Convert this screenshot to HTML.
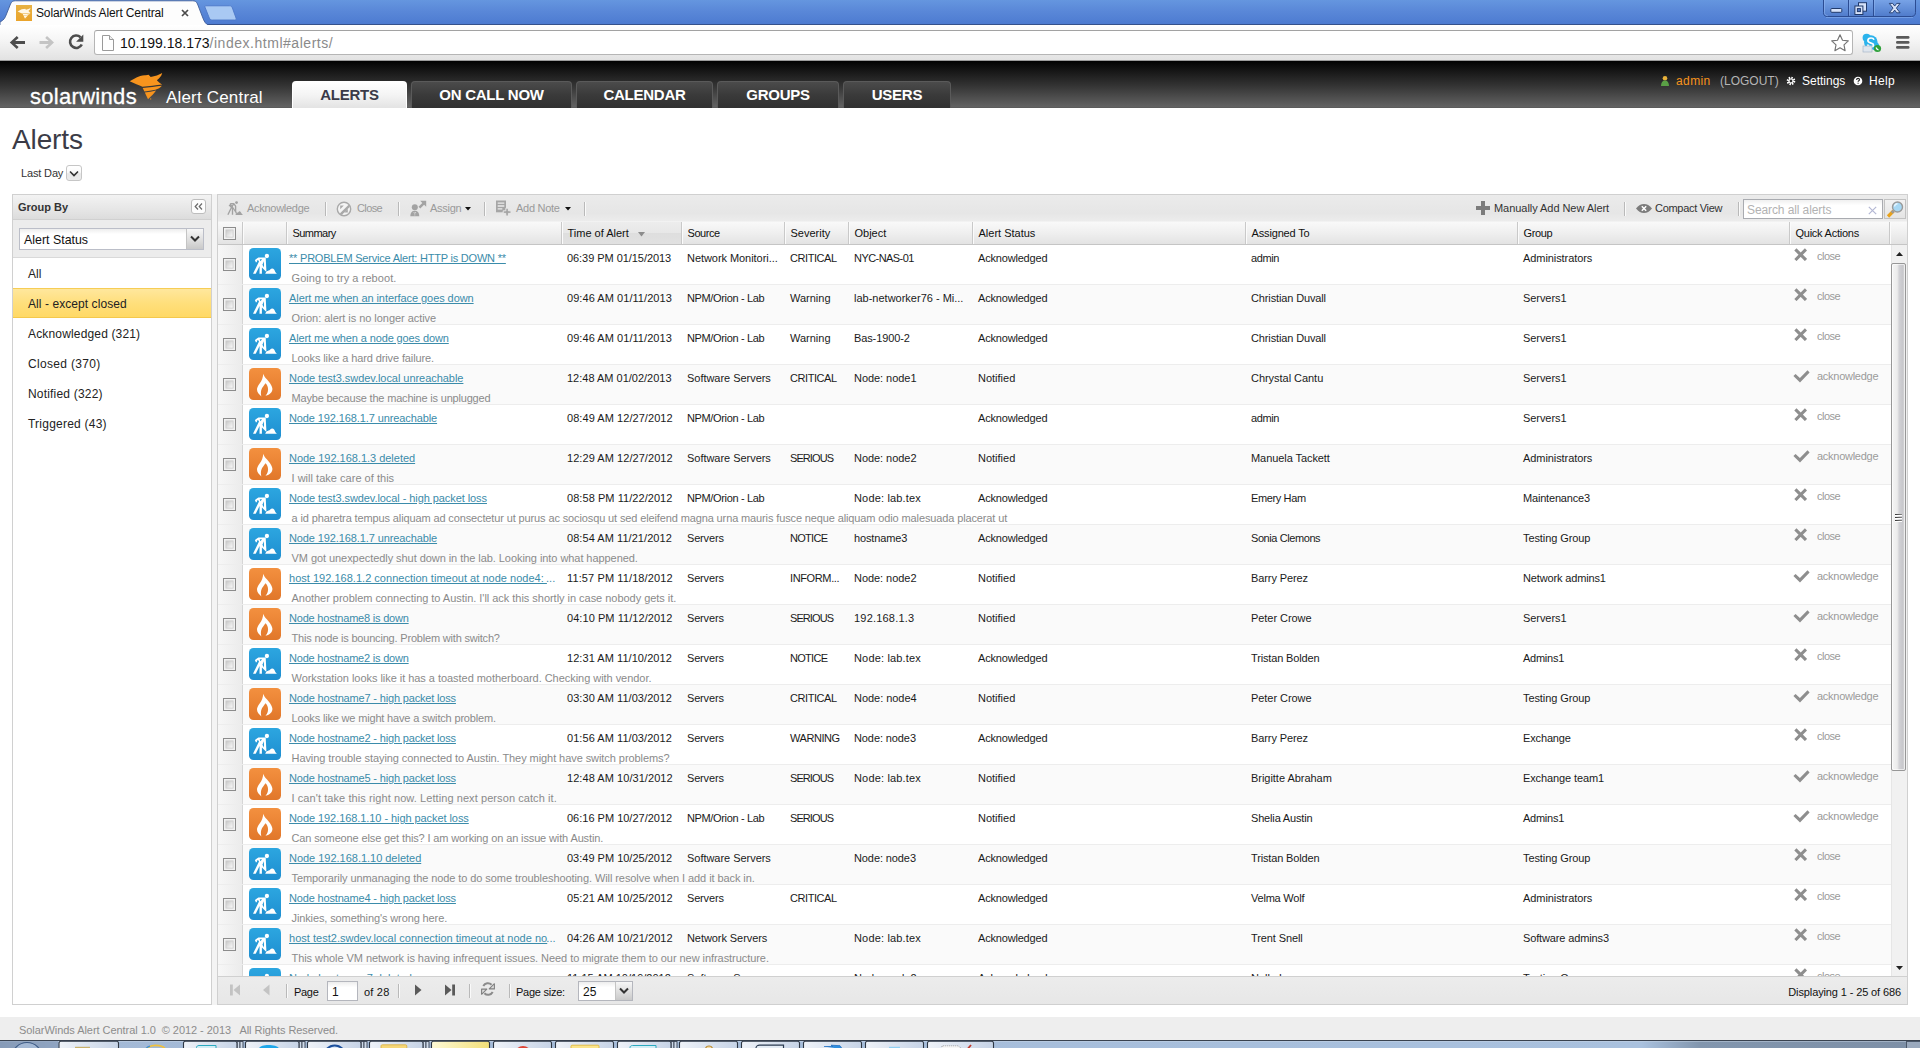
<!DOCTYPE html>
<html><head><meta charset="utf-8"><title>SolarWinds Alert Central</title>
<style>
*{box-sizing:border-box;margin:0;padding:0}
html,body{width:1920px;height:1048px;overflow:hidden;background:#fff;font-family:"Liberation Sans",sans-serif;font-size:11px;color:#222}
body{position:relative}
.abs{position:absolute}
/* ---------- browser chrome ---------- */
#tabstrip{position:absolute;left:0;top:0;width:1920px;height:25px;background:linear-gradient(#6596df,#5a88d8 45%,#4d7bd1);border-bottom:1px solid #35518b}
#toolbar{position:absolute;left:0;top:25px;width:1920px;height:36px;background:linear-gradient(#ffffff,#f6f6f6 40%,#e2e2e2);border-bottom:1px solid #9c9c9c}
#urlbar{position:absolute;left:94px;top:5px;width:1759px;height:25px;background:#fff;border:1px solid #b5b5b5;border-top-color:#a2a2a2;border-radius:3px}
#url{position:absolute;left:25px;top:3px;font-size:14px;line-height:18px;color:#111;white-space:nowrap}
#url span{color:#8a8a8a;letter-spacing:0.53px}
#tabtitle{position:absolute;left:36px;top:5px;font-size:12px;line-height:16px;color:#111;white-space:nowrap;letter-spacing:-0.13px}
/* ---------- app header ---------- */
#hdr{position:absolute;left:0;top:61px;width:1920px;height:47px;background:linear-gradient(#010101,#0c0c0c 10%,#333 52%,#626262 97%,#585858)}
.nav{position:absolute;top:20px;height:27px;border-radius:4px 4px 0 0;font-weight:bold;font-size:15px;line-height:26px;text-align:center;color:#fff;background:linear-gradient(#4b4b4b,#3a3a3a 50%,#303030);border:1px solid #5a5a5a;border-bottom:none;letter-spacing:-0.25px}
.nav.on{background:linear-gradient(#ffffff,#f4f4f4 50%,#e3e3e3);color:#3a3a48;border-color:#fff}
#sw{position:absolute;left:30px;top:23px;font-size:22px;line-height:26px;color:#fff;letter-spacing:0.3px;-webkit-text-stroke:0.3px #fff}
#ac{position:absolute;left:166px;top:26px;font-size:17px;line-height:22px;color:#fff;white-space:nowrap;letter-spacing:0.18px}
#usr{position:absolute;top:13px;font-size:12px;line-height:14px;white-space:nowrap}
/* ---------- title ---------- */
#ttl{position:absolute;left:12px;top:124px;font-size:28px;line-height:32px;color:#3b3b46;letter-spacing:-0.12px}
#lastday{position:absolute;left:21px;top:166px;font-size:11px;line-height:14px;color:#333;letter-spacing:-0.15px}
#ldbtn{position:absolute;left:66px;top:165px;width:16px;height:16px;border:1px solid #c6c6c6;border-radius:3px;background:linear-gradient(#fff,#fafafa 45%,#e8e8e8 55%,#ececec)}
/* ---------- sidebar ---------- */
#side{position:absolute;left:12px;top:194px;width:200px;height:811px;border:1px solid #d0d0d0;background:#fff}
#sidehd{position:absolute;left:0;top:0;width:198px;height:25px;background:linear-gradient(#f3f3f3,#e6e6e6 60%,#dcdcdc);border-bottom:1px solid #d0d0d0;font-weight:bold;font-size:11px;line-height:25px;padding-left:5px;color:#333}
#sidecb{position:absolute;left:0;top:25px;width:198px;height:38px;background:#ececec;border-bottom:1px solid #d9d9d9}
#combo{position:absolute;left:6px;top:8px;width:185px;height:22px;border:1px solid #bbbec8;background:linear-gradient(#ededed,#fff 25%);font-size:12.400px;line-height:22px;padding-left:4px;color:#111}
#combo i{position:absolute;right:0;top:0;width:17px;height:20px;background:linear-gradient(#f7f7f7,#dcdcdc 60%,#c9c9c9);border-left:1px solid #c4c4c4}
.li{position:absolute;left:0;width:198px;height:30px;font-size:12px;line-height:30px;padding-left:15px;color:#222}
.li.sel{background:linear-gradient(#ffe79d,#ffdf7c 50%,#ffd966);border-top:1px solid #f6cd55;border-bottom:1px solid #f4c84c;line-height:30px}
/* ---------- grid panel ---------- */
#grid{position:absolute;left:217px;top:194px;width:1691px;height:811px;border:1px solid #d0d0d0;background:#fff;overflow:hidden}
#tb{position:absolute;left:0;top:0;width:1689px;height:27px;background:linear-gradient(#ebebeb,#e6e6e6 70%,#ececec);border-bottom:1px solid #f2f2f2}
.tbt{position:absolute;top:6px;font-size:11px;line-height:14px;color:#9a9a9a;white-space:nowrap;letter-spacing:-0.28px}
.tbt.dk{color:#333;letter-spacing:-0.05px}
.tsep{position:absolute;top:7px;width:1px;height:14px;background:#b9b9b9;box-shadow:1px 0 0 #fafafa}
#srch{position:absolute;left:1525px;top:4px;width:140px;height:20px;border:1px solid #a9abb0;background:linear-gradient(#f0f0f0,#fff 30%);font-size:12px;line-height:20px;padding-left:3px;color:#b2b2b2;letter-spacing:-0.1px;white-space:nowrap}
#sbtn{position:absolute;left:1666px;top:4px;width:22px;height:20px;border:1px solid #c2c2c2;background:linear-gradient(#f2f2f2,#e4e4e4)}
#gh{position:absolute;left:0;top:27px;width:1689px;height:23px;background:linear-gradient(#f9f9f9,#efefef 50%,#e3e3e3);border-bottom:1px solid #c5c5c5}
.hc{position:absolute;top:0;height:22px;border-left:1px solid #c9c9c9;box-shadow:inset 1px 0 0 #fbfbfb;font-size:11px;line-height:22px;padding-left:5.500px;color:#111;white-space:nowrap}
.cb{position:absolute;width:13px;height:13px;border:1px solid #8c8c8c;background:linear-gradient(135deg,#c4c4c4 15%,#f6f6f6 75%);box-shadow:inset 0 0 0 1.500px #f2f2f2,inset 0 0 0 2.300px #c8c8c8}
#gb{position:absolute;left:0;top:50px;width:1673px;height:731px;overflow:hidden;background:#fff}
.row{position:absolute;left:0;width:1673px;height:40px;border-bottom:1px solid #ededed;background:#fff}
.row.alt{background:#fafafa}
.rcb{left:5px;top:13px}
.vsep{position:absolute;left:0;top:0;width:25px;height:39px;background:linear-gradient(90deg,#f7f7f7,#ebebeb);border-right:1px solid #d6d6d6}
.ic{position:absolute;left:31px;top:3px;width:32px;height:32px}
.ti{position:absolute;left:71px;top:6px;font-size:11px;line-height:14px;color:#3b8caa;text-decoration:underline;white-space:nowrap}
.tw{position:absolute;left:71px;top:6px;font-size:11px;line-height:14px;color:#3b8caa;white-space:pre}
.ti2{text-decoration:underline}
.el{letter-spacing:0.1px;margin-left:-1px}
.sub{position:absolute;left:73.500px;top:26px;font-size:11px;line-height:14px;color:#8a8a8a;white-space:nowrap}
.c{position:absolute;top:6px;font-size:11px;line-height:14px;color:#1a1a1a;white-space:nowrap}
.c-time{left:349px}.c-src{left:469px}.c-sev{left:572px}.c-obj{left:636px}.c-st{left:760px}.c-who{left:1033px}.c-grp{left:1305px}
.qa{position:absolute;left:1576px;top:3px;height:14px;white-space:nowrap}
.qi{position:absolute;left:0;top:1px;width:13px;height:13px}
.qt{position:absolute;left:23px;top:1px;font-size:11px;line-height:14px;color:#9a9a9a}
#sb{position:absolute;left:1673px;top:50px;width:16px;height:731px;background:#f1f1f1;border-left:1px solid #e6e6e6}
#thumb{position:absolute;left:-1px;top:18px;width:15px;height:508px;border:1px solid #979797;border-radius:2px;background:linear-gradient(90deg,#f5f5f5,#ececec 40%,#d2d2d6 55%,#c8c8cc 80%,#d8d8d8);box-shadow:inset 0 0 0 1px rgba(255,255,255,.6)}
#thumb i{position:absolute;left:3px;width:7px;height:1px;background:linear-gradient(90deg,#333,#888);box-shadow:0 1px 0 #fff}
#pg{position:absolute;left:0;top:781px;width:1689px;height:28px;background:linear-gradient(#ececec,#e7e7e7);border-top:1px solid #d0d0d0}
.pt{position:absolute;top:8px;font-size:11px;line-height:14px;color:#111;white-space:nowrap}
.pin{position:absolute;top:4px;height:20px;border:1px solid #b4b6bd;background:linear-gradient(#ededed,#fff 30%);font-size:12px;line-height:18px;padding:1px 0 0 4px;color:#111}
.pin i{position:absolute;right:0;top:0;width:17px;height:18px;background:linear-gradient(#f7f7f7,#dcdcdc 60%,#c9c9c9);border-left:1px solid #c4c4c4}
/* ---------- footer ---------- */
#foot{position:absolute;left:0;top:1017px;width:1920px;height:24px;background:#eeeeee;font-size:11px;line-height:14px;color:#8c8c8c;padding:6px 0 0 19px;white-space:pre;letter-spacing:-0.05px}
#task{position:absolute;left:0;top:1040px;width:1920px;height:8px;overflow:hidden}
</style></head>
<body>
<svg width="0" height="0" style="position:absolute"><defs>
<linearGradient id="gblue" x1="0" y1="0" x2="0" y2="1"><stop offset="0" stop-color="#2ca6e0"/><stop offset="1" stop-color="#1e8dcf"/></linearGradient>
<linearGradient id="gorange" x1="0" y1="0" x2="0" y2="1"><stop offset="0" stop-color="#f3903f"/><stop offset="1" stop-color="#e1772a"/></linearGradient>
</defs></svg>
<!-- ======= browser chrome ======= -->
<div id="tabstrip">
<svg class="abs" style="left:0;top:0" width="260" height="26" viewBox="0 0 260 26">
 <path d="M0 26 L0 22 C4 20 5 18 6.500 14 L10.500 4 C11.500 1.500 13 .8 15.500 .8 L192.500 .8 C195 .8 196.500 1.500 197.500 4 L202.500 17 C204 21 205.500 24.500 209.500 25.500 L260 25.500 L260 26 Z" fill="#fdfdfd" stroke="#3f5d99" stroke-width="0.900"/>
 <path d="M205.800 5.800 L229.500 5.800 C231 5.800 231.800 6.400 232.400 7.900 L236 18 C236.500 19.500 236 20 234.500 20 L212.500 20 C211 20 210 19.500 209.300 18 L205.200 7.800 C204.700 6.300 204.800 5.800 205.800 5.800 Z" fill="#a9c9f3" stroke="#4d78c8" stroke-width="0.900"/>
 <defs><linearGradient id="fav" x1="0" y1="0" x2="0" y2="1"><stop offset="0" stop-color="#e7b244"/><stop offset="1" stop-color="#eaa32a"/></linearGradient></defs><rect x="16" y="5" width="16" height="16" fill="url(#fav)"/>
 <g transform="translate(17.300 7.700) scale(.4)" fill="#fff8e8"><path d="M.7 9.200L7.500 5.500C10 4 13 3 16.900 3.200L19.600 2.700 21.700 4.900C26 4.300 30 3 33.200 1 32.500 4 30.500 6.500 27.800 8.200 29.500 10 31.500 11.800 33.200 12.400 27 13.200 20 14 13.500 14.700 10 13.300 5 11 .7 9.200z"/><path d="M13.700 16C20 15.300 27 14.500 32.900 13.700 31.500 15.500 29 17 26.400 17.700 22.500 18.600 19 19.100 15.400 19.400z"/><path d="M15.800 20.400C19.500 20 23.500 19.400 27.100 18.500 25 21.500 22 24.500 19 27.200z"/><circle cx="21.700" cy="26.900" r=".55"/></g>
 <path d="M182 10l6 6M188 10l-6 6" stroke="#4a4a4a" stroke-width="1.700" fill="none"/>
</svg>
<div id="tabtitle">SolarWinds Alert Central</div>
<!-- window buttons -->
<svg class="abs" style="left:1822px;top:0" width="96" height="19" viewBox="0 0 96 19">
 <defs><linearGradient id="wb" x1="0" y1="0" x2="0" y2="1"><stop offset="0" stop-color="#7aa5e8"/><stop offset="1" stop-color="#4f7bcb"/></linearGradient></defs>
 <path d="M1.500 -1 L1.500 12.500 C1.500 15.500 3 16.500 5.500 16.500 L89.500 16.500 C92 16.500 93.500 15 93.500 12.500 L93.500 -1 Z" fill="url(#wb)" stroke="#2b4c93" stroke-width="1"/>
 <path d="M2.500 0V12.500C2.500 14.500 3.500 15.500 5.500 15.500" fill="none" stroke="#8fb4ef" stroke-width=".8" opacity=".8"/>
 <path d="M4 17.500H91" stroke="#86aeee" stroke-width=".9" opacity=".7"/>
 <path d="M26.500 0V16M51.500 0V16" stroke="#2b4c93" stroke-width="1"/><path d="M27.500 0V15.500M52.500 0V15.500" stroke="#8fb4ef" stroke-width=".8" opacity=".7"/>
 <rect x="8.800" y="8.500" width="11" height="3.800" rx="1" fill="#d6e2f9" stroke="#213a6b" stroke-width="1"/>
 <g stroke="#213a6b" stroke-width="1"><rect x="36.500" y="2.700" width="8" height="8.500" fill="#d6e2f9"/><rect x="32.900" y="6" width="8" height="8.500" fill="#d6e2f9"/><rect x="35.400" y="8.600" width="3" height="3" fill="#4f7bcb"/></g>
 <path d="M67.300 3.400h3.400l2 2.700 2-2.700h3.400l-3.700 4.700 3.700 4.700h-3.400l-2-2.700-2 2.700h-3.400l3.700-4.700z" fill="#d6e2f9" stroke="#213a6b" stroke-width=".9"/>
</svg>
</div>
<div id="toolbar">
 <svg class="abs" style="left:0;top:0" width="94" height="36" viewBox="0 0 94 36">
  <path d="M9.800 17.500l7-6.500 1.800 1.900-3.500 3.200h9.900v2.800h-9.900l3.500 3.200-1.800 1.900z" fill="#4d4d4d"/>
  <path d="M54 17.500l-7-6.500-1.800 1.900 3.500 3.200h-9.200v2.800h9.200l-3.500 3.200 1.800 1.900z" fill="#c4c4c4"/>
  <path d="M80.500 12.200 A6.200 6.200 0 1 0 81.800 19.500" fill="none" stroke="#4d4d4d" stroke-width="2.600"/>
  <path d="M83.300 9.500v7.200h-7.200z" fill="#4d4d4d"/>
 </svg>
 <div id="urlbar">
  <svg class="abs" style="left:7px;top:4px" width="12" height="16" viewBox="0 0 12 16"><path d="M.5.500h7l4 4v11H.5z" fill="#fff" stroke="#9a9a9a"/><path d="M7.500.5v4h4" fill="#eee" stroke="#9a9a9a"/></svg>
  <div id="url">10.199.18.173<span>/index.html#alerts/</span></div>
  <svg class="abs" style="left:1735px;top:2px" width="20" height="20" viewBox="0 0 20 20"><path d="M10 1.800l2.500 5.400 5.800.7-4.300 4 1.100 5.800L10 14.800l-5.100 2.900L6 11.900l-4.300-4 5.800-.7z" fill="#fff" stroke="#747474" stroke-width="1.150" stroke-linejoin="round"/></svg>
 </div>
 <!-- skype ext -->
 <svg class="abs" style="left:1861px;top:8px" width="22" height="20" viewBox="0 0 22 20">
  <g fill="#2bb3ec"><circle cx="9.800" cy="9" r="6.800"/><circle cx="5.600" cy="4.800" r="4"/><circle cx="14.200" cy="13.200" r="4"/></g>
  <path d="M6.500 11.500c.5 1.500 1.800 2.200 3.300 2.200 1.600 0 2.700-.7 2.700-1.800 0-2.400-5.600-1-5.600-4.300 0-1.600 1.400-2.600 3.100-2.600 1.500 0 2.600.6 3 1.800" fill="none" stroke="#fff" stroke-width="1.700"/>
  <rect x="2" y="13" width="9" height="6" fill="#dfe6ee" stroke="#9fb0c4" stroke-width=".6"/>
  <circle cx="16.500" cy="15.500" r="3.600" fill="#2fa13b"/>
  <path d="M15 14.500c.5 1.500 1.200 2 2.500 2.500" stroke="#fff" stroke-width="1.200" fill="none"/>
 </svg>
 <svg class="abs" style="left:1896px;top:10px" width="14" height="16" viewBox="0 0 14 16"><g fill="#5a5a5a"><rect x="0" y="1.100" width="13.500" height="2.700" rx="1.300"/><rect x="0" y="6.100" width="13.500" height="2.700" rx="1.300"/><rect x="0" y="11.100" width="13.500" height="2.700" rx="1.300"/></g></svg>
</div>

<!-- ======= app header ======= -->
<div id="hdr">
 <div id="sw">solarwinds</div>
 <svg class="abs" style="left:129px;top:11px" width="36" height="32" viewBox="0 0 36 32"><g fill="#f7941e"><path d="M.7 9.200L7.500 5.500C10 4 13 3 16.900 3.200L19.600 2.700 21.700 4.900C26 4.300 30 3 33.200 1 32.500 4 30.500 6.500 27.800 8.200 29.500 10 31.500 11.800 33.200 12.400 27 13.200 20 14 13.500 14.700 10 13.300 5 11 .7 9.200z"/><path d="M13.700 16C20 15.300 27 14.500 32.900 13.700 31.500 15.500 29 17 26.400 17.700 22.500 18.600 19 19.100 15.400 19.400z"/><path d="M15.800 20.400C19.500 20 23.500 19.400 27.100 18.500 25 21.500 22 24.500 19 27.200z"/><circle cx="21.700" cy="26.900" r=".55"/></g></svg>
 <div id="ac">Alert Central</div>
 <div class="nav on" style="left:292px;width:115px">ALERTS</div>
 <div class="nav" style="left:411px;width:161px">ON CALL NOW</div>
 <div class="nav" style="left:576px;width:137px">CALENDAR</div>
 <div class="nav" style="left:717px;width:122px">GROUPS</div>
 <div class="nav" style="left:843px;width:108px">USERS</div>
 <svg class="abs" style="left:1660px;top:14px" width="10" height="12" viewBox="0 0 10 12"><circle cx="5" cy="3.200" r="2.300" fill="#e8b23a"/><path d="M1 11c0-3.500 1.500-5.500 4-5.500s4 2 4 5.500z" fill="#5aa046"/></svg>
 <div id="usr" style="left:1676px;color:#f7941d;letter-spacing:0.4px">admin</div>
 <div id="usr" style="left:1720px;color:#b5b5b5">(LOGOUT)</div>
 <svg class="abs" style="left:1786px;top:15px" width="10" height="10" viewBox="0 0 10 10"><circle cx="5" cy="5" r="3.200" fill="none" stroke="#fff" stroke-width="2.200" stroke-dasharray="1.400 1.100"/><circle cx="5" cy="5" r="2" fill="none" stroke="#fff" stroke-width="1.200"/></svg>
 <div id="usr" style="left:1802px;color:#fff">Settings</div>
 <svg class="abs" style="left:1853px;top:15px" width="10" height="10" viewBox="0 0 10 10"><circle cx="5" cy="5" r="4.300" fill="#fff"/><path d="M3.600 4c0-1 .6-1.600 1.500-1.600s1.400.6 1.400 1.300c0 1-1.400 1-1.400 2.100M5.100 6.800v1" stroke="#222" stroke-width="1.100" fill="none"/></svg>
 <div id="usr" style="left:1869px;color:#fff;letter-spacing:0.3px">Help</div>
</div>

<!-- ======= title ======= -->
<div id="ttl">Alerts</div>
<div id="lastday">Last Day</div>
<div id="ldbtn"><svg class="abs" style="left:2px;top:4px" width="10" height="8" viewBox="0 0 10 8"><path d="M1 1.500l4 4 4-4" fill="none" stroke="#333" stroke-width="1.600"/></svg></div>

<!-- ======= sidebar ======= -->
<div class="abs" style="left:212px;top:194px;width:5px;height:811px;background:#f4f4f4"></div>
<div id="side">
 <div id="sidehd">Group By
  <svg class="abs" style="left:178px;top:4px" width="15" height="15" viewBox="0 0 15 15"><rect x=".5" y=".5" width="14" height="14" rx="2.500" fill="#fdfdfd" stroke="#bdbdbd"/><path d="M7 4.500L4.200 7.500 7 10.500M11 4.500L8.200 7.500 11 10.500" fill="none" stroke="#6a6a6a" stroke-width="1.200"/></svg>
 </div>
 <div id="sidecb"><div id="combo">Alert Status<i><svg class="abs" style="left:3px;top:6px" width="10" height="8" viewBox="0 0 10 8"><path d="M1 1.500l4 4 4-4" fill="none" stroke="#333" stroke-width="2"/></svg></i></div></div>
 <div class="li" style="top:64px">All</div>
 <div class="li sel" style="top:93px;letter-spacing:0.07px">All - except closed</div>
 <div class="li" style="top:124px;letter-spacing:0.16px">Acknowledged (321)</div>
 <div class="li" style="top:154px;letter-spacing:0.32px">Closed (370)</div>
 <div class="li" style="top:184px;letter-spacing:0.19px">Notified (322)</div>
 <div class="li" style="top:214px;letter-spacing:0.23px">Triggered (43)</div>
</div>

<!-- ======= grid ======= -->
<div id="grid">
 <div id="tb">
  <svg class="abs" style="left:9px;top:6px" width="17" height="15" viewBox="0 0 17 15"><g fill="none" stroke="#a2a2a2" stroke-width="1.350" stroke-linejoin="round"><path d="M3.300 2.600H6.800L8.600 5.200V10.200L9.300 12.200"/><path d="M6.800 2.600L3.700 8 .9 13.700"/><path d="M3.300 2.600L3.600 5.600 5.500 7.400V13.700"/><path d="M3.500 4.900L1.900 4.400"/><path d="M3.400 3L8.500 10.600" stroke-width="1.100"/></g><circle cx="9.550" cy="1.600" r="1.400" fill="#a2a2a2"/><path d="M8.400 13.900L9.400 12.100C10.600 11.900 11.200 11.400 11.700 10.800 12.300 10.100 13.100 10.200 13.700 11 14.300 12 14.800 13.100 16 13.900z" fill="#a2a2a2"/></svg>
  <div class="tbt" style="left:29px">Acknowledge</div>
  <div class="tsep" style="left:107px"></div>
  <svg class="abs" style="left:118px;top:6px" width="16" height="16" viewBox="0 0 16 16"><circle cx="8" cy="8" r="6.700" fill="#f4f4f4" stroke="#a9a9a9" stroke-width="1.400"/><path d="M3.800 12.600L12.600 3.800a6 6 0 0 1 1.300 2L5.800 13.900a6 6 0 0 1-2-1.300z" fill="#a9a9a9"/><path d="M4.200 4.600h3.600L4.200 8.200zM11.800 11.400H8.200l3.600-3.600z" fill="#a9a9a9"/></svg>
  <div class="tbt" style="left:139px;letter-spacing:-0.6px">Close</div>
  <div class="tsep" style="left:180px"></div>
  <svg class="abs" style="left:192px;top:5px" width="17" height="17" viewBox="0 0 17 17"><g fill="#a3a3a3"><circle cx="4.800" cy="7.300" r="3"/><path d="M.3 16.300c0-3.600 1.500-5.600 4.500-5.600s4.500 2 4.500 5.600z"/><path d="M10.200.8h6v6l-2.100-2.100-3.800 3.800-1.800-1.800 3.800-3.800z"/></g><path d="M3.800 12.200l1 1.200 1-1.200M4.800 14.500v.9" stroke="#f0f0f0" stroke-width=".8" fill="none"/></svg>
  <div class="tbt" style="left:212px">Assign</div>
  <svg class="abs" style="left:247px;top:12px" width="6" height="4" viewBox="0 0 6 4"><path d="M0 0h6L3 3.500z" fill="#111"/></svg>
  <div class="tsep" style="left:266px"></div>
  <svg class="abs" style="left:278px;top:5px" width="15" height="17" viewBox="0 0 15 17"><path d="M0 .5h10v11.800H0z" fill="#a6a6a6"/><path d="M1.700 3.200h6.600M1.700 6h6.600M1.700 8.800h4.600" stroke="#ececec" stroke-width="1.300"/><path d="M9.800 8.200h2.600v2.600H15v2.600h-2.600V16H9.800v-2.600H7.200v-2.600h2.600z" fill="#a6a6a6" stroke="#ececec" stroke-width=".9"/></svg>
  <div class="tbt" style="left:298px">Add Note</div>
  <svg class="abs" style="left:347px;top:12px" width="6" height="4" viewBox="0 0 6 4"><path d="M0 0h6L3 3.500z" fill="#111"/></svg>
  <div class="tsep" style="left:366px"></div>
  <svg class="abs" style="left:1258px;top:6px" width="14" height="14" viewBox="0 0 14 14"><path d="M5 0h4v5h5v4H9v5H5V9H0V5h5z" fill="#7c7c7c"/></svg>
  <div class="tbt dk" style="left:1276px">Manually Add New Alert</div>
  <div class="tsep" style="left:1406px"></div>
  <svg class="abs" style="left:1418px;top:9px" width="16" height="9" viewBox="0 0 16 9"><path d="M0 4.500C2.500 1.300 5 0 8 0s5.500 1.300 8 4.500C13.500 7.700 11 9 8 9S2.500 7.700 0 4.500z" fill="#7c7c7c"/><path d="M5.800 2.300l4.400 4.400M10.200 2.300L5.800 6.700" stroke="#fff" stroke-width="1.500"/></svg>
  <div class="tbt dk" style="left:1437px;letter-spacing:-0.3px">Compact View</div>
  <div class="tsep" style="left:1520px"></div>
  <div id="srch">Search all alerts<svg class="abs" style="left:124px;top:6px" width="9" height="9" viewBox="0 0 9 9"><path d="M.8.800l7.400 7.400M8.200.8L.8 8.200" stroke="#b4b8d4" stroke-width="1.200"/></svg></div>
  <div id="sbtn"><svg class="abs" style="left:1px;top:0" width="19" height="19" viewBox="0 0 19 19"><path d="M2 16.500l5.500-5.500" stroke="#e8a21c" stroke-width="3.200"/><path d="M5.800 12.800l1.700-1.700" stroke="#9a9a9a" stroke-width="2.800"/><circle cx="11.500" cy="7" r="5" fill="#a7d8f4" stroke="#9a9a9a" stroke-width="1.400"/><path d="M8.500 6.500a3.200 3.200 0 0 1 3-2.800" stroke="#e8f6ff" stroke-width="1.400" fill="none"/></svg></div>
 </div>
 <div id="gh">
  <span class="cb" style="left:5px;top:5px"></span>
  <div class="hc" style="left:24px;width:44px"></div>
  <div class="hc" style="left:68px;width:275px;letter-spacing:-0.55px">Summary</div>
  <div class="hc" style="left:343px;width:120px;background:linear-gradient(#ededed,#e7e7e7 50%,#dedede 50%,#e1e1e1)">Time of Alert<svg class="abs" style="left:75.500px;top:10px" width="7" height="4.500" viewBox="0 0 7 4.500"><path d="M0 0h7L3.500 4.500z" fill="#8c8c8c"/></svg></div>
  <div class="hc" style="left:463px;width:103px;letter-spacing:-0.45px">Source</div>
  <div class="hc" style="left:566px;width:64px">Severity</div>
  <div class="hc" style="left:630px;width:124px">Object</div>
  <div class="hc" style="left:754px;width:273px">Alert Status</div>
  <div class="hc" style="left:1027px;width:272px;letter-spacing:-0.15px">Assigned To</div>
  <div class="hc" style="left:1299px;width:272px;letter-spacing:-0.35px">Group</div>
  <div class="hc" style="left:1571px;width:100px;letter-spacing:-0.25px">Quick Actions</div>
  <div class="hc" style="left:1671px;width:18px"></div>
 </div>
 <div id="gb">
<div class="row" style="top:0px"><span class="vsep"></span><span class="cb rcb"></span><svg class="ic" viewBox="0 0 32 32"><rect width="32" height="32" rx="4.500" fill="url(#gblue)"/><g fill="#fff"><circle cx="17.900" cy="8" r="2.150"/><path fill-rule="evenodd" d="M9.400 9.500H16.700L17.400 22.700 16.900 23.600 12.900 19.600V25.800H10.500L10.600 17.900 6.700 25.800H4L10 13.400 9 12 7.700 12.900 8.200 13.800 7 14.500 5.900 12.300 6.800 11.300zM10.700 11.300L11.400 13.300 13.100 11.300zM14.900 13.200L13.400 16.700 15 19.600z"/><path d="M16.200 25.800L17.500 23.300C19 22.700 20.400 22.600 21.200 21.500 22.400 20 24.200 20.200 25.100 21.600 26 23 26.300 24.700 27.900 25.800z"/></g></svg><a class="ti" style="letter-spacing:-0.207px">** PROBLEM Service Alert: HTTP is DOWN **</a><span class="sub" style="letter-spacing:0.071px">Going to try a reboot.</span><span class="c c-time" style="letter-spacing:-0.056px">06:39 PM 01/15/2013</span><span class="c c-src" style="letter-spacing:-0.056px">Network Monitori...</span><span class="c c-sev" style="letter-spacing:-0.429px">CRITICAL</span><span class="c c-obj" style="letter-spacing:-0.556px">NYC-NAS-01</span><span class="c c-st" style="letter-spacing:-0.182px">Acknowledged</span><span class="c c-who" style="letter-spacing:-0.375px">admin</span><span class="c c-grp" style="letter-spacing:-0.077px">Administrators</span><span class="qa"><svg class="abs" style="left:0;top:0" width="13.400" height="13.400" viewBox="0 0 13.400 13.400"><path d="M1.400 1.400L12 12M12 1.400L1.400 12" stroke="#8e8e8e" stroke-width="3.100" fill="none"/></svg><span class="qt" style="letter-spacing:-0.5px">close</span></span></div>
<div class="row alt" style="top:40px"><span class="vsep"></span><span class="cb rcb"></span><svg class="ic" viewBox="0 0 32 32"><rect width="32" height="32" rx="4.500" fill="url(#gblue)"/><g fill="#fff"><circle cx="17.900" cy="8" r="2.150"/><path fill-rule="evenodd" d="M9.400 9.500H16.700L17.400 22.700 16.900 23.600 12.900 19.600V25.800H10.500L10.600 17.900 6.700 25.800H4L10 13.400 9 12 7.700 12.900 8.200 13.800 7 14.500 5.900 12.300 6.800 11.300zM10.700 11.300L11.400 13.300 13.100 11.300zM14.900 13.200L13.400 16.700 15 19.600z"/><path d="M16.200 25.800L17.500 23.300C19 22.700 20.400 22.600 21.200 21.500 22.400 20 24.200 20.200 25.100 21.600 26 23 26.300 24.700 27.900 25.800z"/></g></svg><a class="ti" style="letter-spacing:-0.069px">Alert me when an interface goes down</a><span class="sub" style="letter-spacing:-0.048px">Orion: alert is no longer active</span><span class="c c-time" style="letter-spacing:0.056px">09:46 AM 01/11/2013</span><span class="c c-src" style="letter-spacing:-0.357px">NPM/Orion - Lab</span><span class="c c-sev">Warning</span><span class="c c-obj">lab-networker76 - Mi...</span><span class="c c-st" style="letter-spacing:-0.182px">Acknowledged</span><span class="c c-who" style="letter-spacing:-0.133px">Christian Duvall</span><span class="c c-grp" style="letter-spacing:-0.071px">Servers1</span><span class="qa"><svg class="abs" style="left:0;top:0" width="13.400" height="13.400" viewBox="0 0 13.400 13.400"><path d="M1.400 1.400L12 12M12 1.400L1.400 12" stroke="#8e8e8e" stroke-width="3.100" fill="none"/></svg><span class="qt" style="letter-spacing:-0.5px">close</span></span></div>
<div class="row" style="top:80px"><span class="vsep"></span><span class="cb rcb"></span><svg class="ic" viewBox="0 0 32 32"><rect width="32" height="32" rx="4.500" fill="url(#gblue)"/><g fill="#fff"><circle cx="17.900" cy="8" r="2.150"/><path fill-rule="evenodd" d="M9.400 9.500H16.700L17.400 22.700 16.900 23.600 12.900 19.600V25.800H10.500L10.600 17.900 6.700 25.800H4L10 13.400 9 12 7.700 12.900 8.200 13.800 7 14.500 5.900 12.300 6.800 11.300zM10.700 11.300L11.400 13.300 13.100 11.300zM14.900 13.200L13.400 16.700 15 19.600z"/><path d="M16.200 25.800L17.500 23.300C19 22.700 20.400 22.600 21.200 21.500 22.400 20 24.200 20.200 25.100 21.600 26 23 26.300 24.700 27.900 25.800z"/></g></svg><a class="ti" style="letter-spacing:-0.117px">Alert me when a node goes down</a><span class="sub" style="letter-spacing:-0.113px">Looks like a hard drive failure.</span><span class="c c-time" style="letter-spacing:0.056px">09:46 AM 01/11/2013</span><span class="c c-src" style="letter-spacing:-0.357px">NPM/Orion - Lab</span><span class="c c-sev">Warning</span><span class="c c-obj" style="letter-spacing:-0.111px">Bas-1900-2</span><span class="c c-st" style="letter-spacing:-0.182px">Acknowledged</span><span class="c c-who" style="letter-spacing:-0.133px">Christian Duvall</span><span class="c c-grp" style="letter-spacing:-0.071px">Servers1</span><span class="qa"><svg class="abs" style="left:0;top:0" width="13.400" height="13.400" viewBox="0 0 13.400 13.400"><path d="M1.400 1.400L12 12M12 1.400L1.400 12" stroke="#8e8e8e" stroke-width="3.100" fill="none"/></svg><span class="qt" style="letter-spacing:-0.5px">close</span></span></div>
<div class="row alt" style="top:120px"><span class="vsep"></span><span class="cb rcb"></span><svg class="ic" viewBox="0 0 32 32"><rect width="32" height="32" rx="4.500" fill="url(#gorange)"/><path fill="#fff" d="M14.300 5.800C15.200 9.500 18.500 11.500 21.200 15.500 23.500 19 24.200 21.500 22.600 24 21.300 26 19 27.200 16.500 27.800 18.600 25.500 19.500 22.500 18.900 19.800 18.500 17.800 17.600 16.200 16.400 15.300 15.800 17 13 19 12.200 22.200 11.700 24.300 11.800 26.500 12.400 28.400 10 26.500 8 24.200 8 21.600 8 18 12 14.500 13.200 11 13.800 9.200 14.200 7.500 14.300 5.800z"/></svg><a class="ti" style="letter-spacing:-0.044px">Node test3.swdev.local unreachable</a><span class="sub" style="letter-spacing:-0.189px">Maybe because the machine is unplugged</span><span class="c c-time">12:48 AM 01/02/2013</span><span class="c c-src" style="letter-spacing:-0.033px">Software Servers</span><span class="c c-sev" style="letter-spacing:-0.429px">CRITICAL</span><span class="c c-obj" style="letter-spacing:-0.050px">Node: node1</span><span class="c c-st">Notified</span><span class="c c-who" style="letter-spacing:-0.038px">Chrystal Cantu</span><span class="c c-grp" style="letter-spacing:-0.071px">Servers1</span><span class="qa"><svg class="abs" style="left:-1.500px;top:1.500px" width="17" height="13" viewBox="0 0 17 13"><path d="M.4 6L2.600 3.900 6.900 8.100 14.500.3 16.600 2.600 7 12.500z" fill="#8e8e8e"/></svg><span class="qt" style="letter-spacing:-0.27px">acknowledge</span></span></div>
<div class="row" style="top:160px"><span class="vsep"></span><span class="cb rcb"></span><svg class="ic" viewBox="0 0 32 32"><rect width="32" height="32" rx="4.500" fill="url(#gblue)"/><g fill="#fff"><circle cx="17.900" cy="8" r="2.150"/><path fill-rule="evenodd" d="M9.400 9.500H16.700L17.400 22.700 16.900 23.600 12.900 19.600V25.800H10.500L10.600 17.900 6.700 25.800H4L10 13.400 9 12 7.700 12.900 8.200 13.800 7 14.500 5.900 12.300 6.800 11.300zM10.700 11.300L11.400 13.300 13.100 11.300zM14.900 13.200L13.400 16.700 15 19.600z"/><path d="M16.200 25.800L17.500 23.300C19 22.700 20.400 22.600 21.200 21.500 22.400 20 24.200 20.200 25.100 21.600 26 23 26.300 24.700 27.900 25.800z"/></g></svg><a class="ti" style="letter-spacing:-0.107px">Node 192.168.1.7 unreachable</a><span class="sub"></span><span class="c c-time" style="letter-spacing:0.056px">08:49 AM 12/27/2012</span><span class="c c-src" style="letter-spacing:-0.357px">NPM/Orion - Lab</span><span class="c c-sev"></span><span class="c c-obj"></span><span class="c c-st" style="letter-spacing:-0.182px">Acknowledged</span><span class="c c-who" style="letter-spacing:-0.375px">admin</span><span class="c c-grp" style="letter-spacing:-0.071px">Servers1</span><span class="qa"><svg class="abs" style="left:0;top:0" width="13.400" height="13.400" viewBox="0 0 13.400 13.400"><path d="M1.400 1.400L12 12M12 1.400L1.400 12" stroke="#8e8e8e" stroke-width="3.100" fill="none"/></svg><span class="qt" style="letter-spacing:-0.5px">close</span></span></div>
<div class="row alt" style="top:200px"><span class="vsep"></span><span class="cb rcb"></span><svg class="ic" viewBox="0 0 32 32"><rect width="32" height="32" rx="4.500" fill="url(#gorange)"/><path fill="#fff" d="M14.300 5.800C15.200 9.500 18.500 11.500 21.200 15.500 23.500 19 24.200 21.500 22.600 24 21.300 26 19 27.200 16.500 27.800 18.600 25.500 19.500 22.500 18.900 19.800 18.500 17.800 17.600 16.200 16.400 15.300 15.800 17 13 19 12.200 22.200 11.700 24.300 11.800 26.500 12.400 28.400 10 26.500 8 24.200 8 21.600 8 18 12 14.500 13.200 11 13.800 9.200 14.200 7.500 14.300 5.800z"/></svg><a class="ti" style="letter-spacing:-0.021px">Node 192.168.1.3 deleted</a><span class="sub" style="letter-spacing:0.022px">I will take care of this</span><span class="c c-time" style="letter-spacing:0.056px">12:29 AM 12/27/2012</span><span class="c c-src" style="letter-spacing:-0.033px">Software Servers</span><span class="c c-sev" style="letter-spacing:-0.917px">SERIOUS</span><span class="c c-obj" style="letter-spacing:-0.050px">Node: node2</span><span class="c c-st">Notified</span><span class="c c-who" style="letter-spacing:-0.071px">Manuela Tackett</span><span class="c c-grp" style="letter-spacing:-0.077px">Administrators</span><span class="qa"><svg class="abs" style="left:-1.500px;top:1.500px" width="17" height="13" viewBox="0 0 17 13"><path d="M.4 6L2.600 3.900 6.900 8.100 14.500.3 16.600 2.600 7 12.500z" fill="#8e8e8e"/></svg><span class="qt" style="letter-spacing:-0.27px">acknowledge</span></span></div>
<div class="row" style="top:240px"><span class="vsep"></span><span class="cb rcb"></span><svg class="ic" viewBox="0 0 32 32"><rect width="32" height="32" rx="4.500" fill="url(#gblue)"/><g fill="#fff"><circle cx="17.900" cy="8" r="2.150"/><path fill-rule="evenodd" d="M9.400 9.500H16.700L17.400 22.700 16.900 23.600 12.900 19.600V25.800H10.500L10.600 17.900 6.700 25.800H4L10 13.400 9 12 7.700 12.900 8.200 13.800 7 14.500 5.900 12.300 6.800 11.300zM10.700 11.300L11.400 13.300 13.100 11.300zM14.900 13.200L13.400 16.700 15 19.600z"/><path d="M16.200 25.800L17.500 23.300C19 22.700 20.400 22.600 21.200 21.500 22.400 20 24.200 20.200 25.100 21.600 26 23 26.300 24.700 27.900 25.800z"/></g></svg><a class="ti" style="letter-spacing:-0.073px">Node test3.swdev.local - high packet loss</a><span class="sub" style="letter-spacing:-0.125px">a id pharetra tempus aliquam ad consectetur ut purus ac sociosqu ut sed eleifend magna urna mauris fusce neque aliquam odio malesuada placerat ut</span><span class="c c-time" style="letter-spacing:0.056px">08:58 PM 11/22/2012</span><span class="c c-src" style="letter-spacing:-0.357px">NPM/Orion - Lab</span><span class="c c-sev"></span><span class="c c-obj" style="letter-spacing:0.167px">Node: lab.tex</span><span class="c c-st" style="letter-spacing:-0.182px">Acknowledged</span><span class="c c-who" style="letter-spacing:-0.375px">Emery Ham</span><span class="c c-grp" style="letter-spacing:-0.182px">Maintenance3</span><span class="qa"><svg class="abs" style="left:0;top:0" width="13.400" height="13.400" viewBox="0 0 13.400 13.400"><path d="M1.400 1.400L12 12M12 1.400L1.400 12" stroke="#8e8e8e" stroke-width="3.100" fill="none"/></svg><span class="qt" style="letter-spacing:-0.5px">close</span></span></div>
<div class="row alt" style="top:280px"><span class="vsep"></span><span class="cb rcb"></span><svg class="ic" viewBox="0 0 32 32"><rect width="32" height="32" rx="4.500" fill="url(#gblue)"/><g fill="#fff"><circle cx="17.900" cy="8" r="2.150"/><path fill-rule="evenodd" d="M9.400 9.500H16.700L17.400 22.700 16.900 23.600 12.900 19.600V25.800H10.500L10.600 17.900 6.700 25.800H4L10 13.400 9 12 7.700 12.900 8.200 13.800 7 14.500 5.900 12.300 6.800 11.300zM10.700 11.300L11.400 13.300 13.100 11.300zM14.900 13.200L13.400 16.700 15 19.600z"/><path d="M16.200 25.800L17.500 23.300C19 22.700 20.400 22.600 21.200 21.500 22.400 20 24.200 20.200 25.100 21.600 26 23 26.300 24.700 27.900 25.800z"/></g></svg><a class="ti" style="letter-spacing:-0.107px">Node 192.168.1.7 unreachable</a><span class="sub" style="letter-spacing:-0.059px">VM got unexpectedly shut down in the lab. Looking into what happened.</span><span class="c c-time" style="letter-spacing:0.056px">08:54 AM 11/21/2012</span><span class="c c-src" style="letter-spacing:-0.167px">Servers</span><span class="c c-sev" style="letter-spacing:-0.700px">NOTICE</span><span class="c c-obj" style="letter-spacing:-0.125px">hostname3</span><span class="c c-st" style="letter-spacing:-0.182px">Acknowledged</span><span class="c c-who" style="letter-spacing:-0.417px">Sonia Clemons</span><span class="c c-grp" style="letter-spacing:-0.083px">Testing Group</span><span class="qa"><svg class="abs" style="left:0;top:0" width="13.400" height="13.400" viewBox="0 0 13.400 13.400"><path d="M1.400 1.400L12 12M12 1.400L1.400 12" stroke="#8e8e8e" stroke-width="3.100" fill="none"/></svg><span class="qt" style="letter-spacing:-0.5px">close</span></span></div>
<div class="row" style="top:320px"><span class="vsep"></span><span class="cb rcb"></span><svg class="ic" viewBox="0 0 32 32"><rect width="32" height="32" rx="4.500" fill="url(#gorange)"/><path fill="#fff" d="M14.300 5.800C15.200 9.500 18.500 11.500 21.200 15.500 23.500 19 24.200 21.500 22.600 24 21.300 26 19 27.200 16.500 27.800 18.600 25.500 19.500 22.500 18.900 19.800 18.500 17.800 17.600 16.200 16.400 15.300 15.800 17 13 19 12.200 22.200 11.700 24.300 11.800 26.500 12.400 28.400 10 26.500 8 24.200 8 21.600 8 18 12 14.500 13.200 11 13.800 9.200 14.200 7.500 14.300 5.800z"/></svg><span class="tw"><a class="ti2" style="letter-spacing:0.020px">host 192.168.1.2 connection timeout at node node4: </a><span class="el">...</span></span><span class="sub" style="letter-spacing:-0.030px">Another problem connecting to Austin. I&#x27;ll ack this shortly in case nobody gets it.</span><span class="c c-time" style="letter-spacing:0.111px">11:57 PM 11/18/2012</span><span class="c c-src" style="letter-spacing:-0.167px">Servers</span><span class="c c-sev" style="letter-spacing:-0.375px">INFORM...</span><span class="c c-obj" style="letter-spacing:-0.050px">Node: node2</span><span class="c c-st">Notified</span><span class="c c-who" style="letter-spacing:-0.100px">Barry Perez</span><span class="c c-grp" style="letter-spacing:-0.143px">Network admins1</span><span class="qa"><svg class="abs" style="left:-1.500px;top:1.500px" width="17" height="13" viewBox="0 0 17 13"><path d="M.4 6L2.600 3.900 6.900 8.100 14.500.3 16.600 2.600 7 12.500z" fill="#8e8e8e"/></svg><span class="qt" style="letter-spacing:-0.27px">acknowledge</span></span></div>
<div class="row alt" style="top:360px"><span class="vsep"></span><span class="cb rcb"></span><svg class="ic" viewBox="0 0 32 32"><rect width="32" height="32" rx="4.500" fill="url(#gorange)"/><path fill="#fff" d="M14.300 5.800C15.200 9.500 18.500 11.500 21.200 15.500 23.500 19 24.200 21.500 22.600 24 21.300 26 19 27.200 16.500 27.800 18.600 25.500 19.500 22.500 18.900 19.800 18.500 17.800 17.600 16.200 16.400 15.300 15.800 17 13 19 12.200 22.200 11.700 24.300 11.800 26.500 12.400 28.400 10 26.500 8 24.200 8 21.600 8 18 12 14.500 13.200 11 13.800 9.200 14.200 7.500 14.300 5.800z"/></svg><a class="ti" style="letter-spacing:-0.205px">Node hostname8 is down</a><span class="sub" style="letter-spacing:-0.190px">This node is bouncing. Problem with switch?</span><span class="c c-time" style="letter-spacing:0.056px">04:10 PM 11/12/2012</span><span class="c c-src" style="letter-spacing:-0.167px">Servers</span><span class="c c-sev" style="letter-spacing:-0.917px">SERIOUS</span><span class="c c-obj" style="letter-spacing:0.200px">192.168.1.3</span><span class="c c-st">Notified</span><span class="c c-who" style="letter-spacing:-0.050px">Peter Crowe</span><span class="c c-grp" style="letter-spacing:-0.071px">Servers1</span><span class="qa"><svg class="abs" style="left:-1.500px;top:1.500px" width="17" height="13" viewBox="0 0 17 13"><path d="M.4 6L2.600 3.900 6.900 8.100 14.500.3 16.600 2.600 7 12.500z" fill="#8e8e8e"/></svg><span class="qt" style="letter-spacing:-0.27px">acknowledge</span></span></div>
<div class="row" style="top:400px"><span class="vsep"></span><span class="cb rcb"></span><svg class="ic" viewBox="0 0 32 32"><rect width="32" height="32" rx="4.500" fill="url(#gblue)"/><g fill="#fff"><circle cx="17.900" cy="8" r="2.150"/><path fill-rule="evenodd" d="M9.400 9.500H16.700L17.400 22.700 16.900 23.600 12.900 19.600V25.800H10.500L10.600 17.900 6.700 25.800H4L10 13.400 9 12 7.700 12.900 8.200 13.800 7 14.500 5.900 12.300 6.800 11.300zM10.700 11.300L11.400 13.300 13.100 11.300zM14.900 13.200L13.400 16.700 15 19.600z"/><path d="M16.200 25.800L17.500 23.300C19 22.700 20.400 22.600 21.200 21.500 22.400 20 24.200 20.200 25.100 21.600 26 23 26.300 24.700 27.900 25.800z"/></g></svg><a class="ti" style="letter-spacing:-0.205px">Node hostname2 is down</a><span class="sub" style="letter-spacing:-0.041px">Workstation looks like it has a toasted motherboard. Checking with vendor.</span><span class="c c-time" style="letter-spacing:0.056px">12:31 AM 11/10/2012</span><span class="c c-src" style="letter-spacing:-0.167px">Servers</span><span class="c c-sev" style="letter-spacing:-0.700px">NOTICE</span><span class="c c-obj" style="letter-spacing:0.167px">Node: lab.tex</span><span class="c c-st" style="letter-spacing:-0.182px">Acknowledged</span><span class="c c-who" style="letter-spacing:-0.154px">Tristan Bolden</span><span class="c c-grp" style="letter-spacing:-0.250px">Admins1</span><span class="qa"><svg class="abs" style="left:0;top:0" width="13.400" height="13.400" viewBox="0 0 13.400 13.400"><path d="M1.400 1.400L12 12M12 1.400L1.400 12" stroke="#8e8e8e" stroke-width="3.100" fill="none"/></svg><span class="qt" style="letter-spacing:-0.5px">close</span></span></div>
<div class="row alt" style="top:440px"><span class="vsep"></span><span class="cb rcb"></span><svg class="ic" viewBox="0 0 32 32"><rect width="32" height="32" rx="4.500" fill="url(#gorange)"/><path fill="#fff" d="M14.300 5.800C15.200 9.500 18.500 11.500 21.200 15.500 23.500 19 24.200 21.500 22.600 24 21.300 26 19 27.200 16.500 27.800 18.600 25.500 19.500 22.500 18.900 19.800 18.500 17.800 17.600 16.200 16.400 15.300 15.800 17 13 19 12.200 22.200 11.700 24.300 11.800 26.500 12.400 28.400 10 26.500 8 24.200 8 21.600 8 18 12 14.500 13.200 11 13.800 9.200 14.200 7.500 14.300 5.800z"/></svg><a class="ti" style="letter-spacing:-0.167px">Node hostname7 - high packet loss</a><span class="sub" style="letter-spacing:-0.171px">Looks like we might have a switch problem.</span><span class="c c-time" style="letter-spacing:0.056px">03:30 AM 11/03/2012</span><span class="c c-src" style="letter-spacing:-0.167px">Servers</span><span class="c c-sev" style="letter-spacing:-0.429px">CRITICAL</span><span class="c c-obj" style="letter-spacing:-0.040px">Node: node4</span><span class="c c-st">Notified</span><span class="c c-who" style="letter-spacing:-0.050px">Peter Crowe</span><span class="c c-grp" style="letter-spacing:-0.083px">Testing Group</span><span class="qa"><svg class="abs" style="left:-1.500px;top:1.500px" width="17" height="13" viewBox="0 0 17 13"><path d="M.4 6L2.600 3.900 6.900 8.100 14.500.3 16.600 2.600 7 12.500z" fill="#8e8e8e"/></svg><span class="qt" style="letter-spacing:-0.27px">acknowledge</span></span></div>
<div class="row" style="top:480px"><span class="vsep"></span><span class="cb rcb"></span><svg class="ic" viewBox="0 0 32 32"><rect width="32" height="32" rx="4.500" fill="url(#gblue)"/><g fill="#fff"><circle cx="17.900" cy="8" r="2.150"/><path fill-rule="evenodd" d="M9.400 9.500H16.700L17.400 22.700 16.900 23.600 12.900 19.600V25.800H10.500L10.600 17.900 6.700 25.800H4L10 13.400 9 12 7.700 12.900 8.200 13.800 7 14.500 5.900 12.300 6.800 11.300zM10.700 11.300L11.400 13.300 13.100 11.300zM14.900 13.200L13.400 16.700 15 19.600z"/><path d="M16.200 25.800L17.500 23.300C19 22.700 20.400 22.600 21.200 21.500 22.400 20 24.200 20.200 25.100 21.600 26 23 26.300 24.700 27.900 25.800z"/></g></svg><a class="ti" style="letter-spacing:-0.167px">Node hostname2 - high packet loss</a><span class="sub" style="letter-spacing:-0.067px">Having trouble staying connected to Austin. They might have switch problems?</span><span class="c c-time" style="letter-spacing:0.056px">01:56 AM 11/03/2012</span><span class="c c-src" style="letter-spacing:-0.167px">Servers</span><span class="c c-sev" style="letter-spacing:-0.433px">WARNING</span><span class="c c-obj" style="letter-spacing:-0.100px">Node: node3</span><span class="c c-st" style="letter-spacing:-0.182px">Acknowledged</span><span class="c c-who" style="letter-spacing:-0.100px">Barry Perez</span><span class="c c-grp" style="letter-spacing:-0.143px">Exchange</span><span class="qa"><svg class="abs" style="left:0;top:0" width="13.400" height="13.400" viewBox="0 0 13.400 13.400"><path d="M1.400 1.400L12 12M12 1.400L1.400 12" stroke="#8e8e8e" stroke-width="3.100" fill="none"/></svg><span class="qt" style="letter-spacing:-0.5px">close</span></span></div>
<div class="row alt" style="top:520px"><span class="vsep"></span><span class="cb rcb"></span><svg class="ic" viewBox="0 0 32 32"><rect width="32" height="32" rx="4.500" fill="url(#gorange)"/><path fill="#fff" d="M14.300 5.800C15.200 9.500 18.500 11.500 21.200 15.500 23.500 19 24.200 21.500 22.600 24 21.300 26 19 27.200 16.500 27.800 18.600 25.500 19.500 22.500 18.900 19.800 18.500 17.800 17.600 16.200 16.400 15.300 15.800 17 13 19 12.200 22.200 11.700 24.300 11.800 26.500 12.400 28.400 10 26.500 8 24.200 8 21.600 8 18 12 14.500 13.200 11 13.800 9.200 14.200 7.500 14.300 5.800z"/></svg><a class="ti" style="letter-spacing:-0.167px">Node hostname5 - high packet loss</a><span class="sub" style="letter-spacing:0.079px">I can&#x27;t take this right now. Letting next person catch it.</span><span class="c c-time" style="letter-spacing:0.056px">12:48 AM 10/31/2012</span><span class="c c-src" style="letter-spacing:-0.167px">Servers</span><span class="c c-sev" style="letter-spacing:-0.917px">SERIOUS</span><span class="c c-obj" style="letter-spacing:0.167px">Node: lab.tex</span><span class="c c-st">Notified</span><span class="c c-who" style="letter-spacing:-0.033px">Brigitte Abraham</span><span class="c c-grp" style="letter-spacing:-0.115px">Exchange team1</span><span class="qa"><svg class="abs" style="left:-1.500px;top:1.500px" width="17" height="13" viewBox="0 0 17 13"><path d="M.4 6L2.600 3.900 6.900 8.100 14.500.3 16.600 2.600 7 12.500z" fill="#8e8e8e"/></svg><span class="qt" style="letter-spacing:-0.27px">acknowledge</span></span></div>
<div class="row" style="top:560px"><span class="vsep"></span><span class="cb rcb"></span><svg class="ic" viewBox="0 0 32 32"><rect width="32" height="32" rx="4.500" fill="url(#gorange)"/><path fill="#fff" d="M14.300 5.800C15.200 9.500 18.500 11.500 21.200 15.500 23.500 19 24.200 21.500 22.600 24 21.300 26 19 27.200 16.500 27.800 18.600 25.500 19.500 22.500 18.900 19.800 18.500 17.800 17.600 16.200 16.400 15.300 15.800 17 13 19 12.200 22.200 11.700 24.300 11.800 26.500 12.400 28.400 10 26.500 8 24.200 8 21.600 8 18 12 14.500 13.200 11 13.800 9.200 14.200 7.500 14.300 5.800z"/></svg><a class="ti" style="letter-spacing:-0.069px">Node 192.168.1.10 - high packet loss</a><span class="sub" style="letter-spacing:-0.127px">Can someone else get this? I am working on an issue with Austin.</span><span class="c c-time">06:16 PM 10/27/2012</span><span class="c c-src" style="letter-spacing:-0.357px">NPM/Orion - Lab</span><span class="c c-sev" style="letter-spacing:-0.917px">SERIOUS</span><span class="c c-obj"></span><span class="c c-st">Notified</span><span class="c c-who" style="letter-spacing:-0.167px">Shelia Austin</span><span class="c c-grp" style="letter-spacing:-0.250px">Admins1</span><span class="qa"><svg class="abs" style="left:-1.500px;top:1.500px" width="17" height="13" viewBox="0 0 17 13"><path d="M.4 6L2.600 3.900 6.900 8.100 14.500.3 16.600 2.600 7 12.500z" fill="#8e8e8e"/></svg><span class="qt" style="letter-spacing:-0.27px">acknowledge</span></span></div>
<div class="row alt" style="top:600px"><span class="vsep"></span><span class="cb rcb"></span><svg class="ic" viewBox="0 0 32 32"><rect width="32" height="32" rx="4.500" fill="url(#gblue)"/><g fill="#fff"><circle cx="17.900" cy="8" r="2.150"/><path fill-rule="evenodd" d="M9.400 9.500H16.700L17.400 22.700 16.900 23.600 12.900 19.600V25.800H10.500L10.600 17.900 6.700 25.800H4L10 13.400 9 12 7.700 12.900 8.200 13.800 7 14.500 5.900 12.300 6.800 11.300zM10.700 11.300L11.400 13.300 13.100 11.300zM14.900 13.200L13.400 16.700 15 19.600z"/><path d="M16.200 25.800L17.500 23.300C19 22.700 20.400 22.600 21.200 21.500 22.400 20 24.200 20.200 25.100 21.600 26 23 26.300 24.700 27.900 25.800z"/></g></svg><a class="ti" style="letter-spacing:-0.020px">Node 192.168.1.10 deleted</a><span class="sub" style="letter-spacing:-0.080px">Temporarily unmanaging the node to do some troubleshooting. Will resolve when I add it back in.</span><span class="c c-time">03:49 PM 10/25/2012</span><span class="c c-src" style="letter-spacing:-0.033px">Software Servers</span><span class="c c-sev"></span><span class="c c-obj" style="letter-spacing:-0.100px">Node: node3</span><span class="c c-st" style="letter-spacing:-0.182px">Acknowledged</span><span class="c c-who" style="letter-spacing:-0.154px">Tristan Bolden</span><span class="c c-grp" style="letter-spacing:-0.083px">Testing Group</span><span class="qa"><svg class="abs" style="left:0;top:0" width="13.400" height="13.400" viewBox="0 0 13.400 13.400"><path d="M1.400 1.400L12 12M12 1.400L1.400 12" stroke="#8e8e8e" stroke-width="3.100" fill="none"/></svg><span class="qt" style="letter-spacing:-0.5px">close</span></span></div>
<div class="row" style="top:640px"><span class="vsep"></span><span class="cb rcb"></span><svg class="ic" viewBox="0 0 32 32"><rect width="32" height="32" rx="4.500" fill="url(#gblue)"/><g fill="#fff"><circle cx="17.900" cy="8" r="2.150"/><path fill-rule="evenodd" d="M9.400 9.500H16.700L17.400 22.700 16.900 23.600 12.900 19.600V25.800H10.500L10.600 17.900 6.700 25.800H4L10 13.400 9 12 7.700 12.900 8.200 13.800 7 14.500 5.900 12.300 6.800 11.300zM10.700 11.300L11.400 13.300 13.100 11.300zM14.900 13.200L13.400 16.700 15 19.600z"/><path d="M16.200 25.800L17.500 23.300C19 22.700 20.400 22.600 21.200 21.500 22.400 20 24.200 20.200 25.100 21.600 26 23 26.300 24.700 27.900 25.800z"/></g></svg><a class="ti" style="letter-spacing:-0.167px">Node hostname4 - high packet loss</a><span class="sub" style="letter-spacing:-0.113px">Jinkies, something&#x27;s wrong here.</span><span class="c c-time" style="letter-spacing:0.056px">05:21 AM 10/25/2012</span><span class="c c-src" style="letter-spacing:-0.167px">Servers</span><span class="c c-sev" style="letter-spacing:-0.429px">CRITICAL</span><span class="c c-obj"></span><span class="c c-st" style="letter-spacing:-0.182px">Acknowledged</span><span class="c c-who" style="letter-spacing:-0.222px">Velma Wolf</span><span class="c c-grp" style="letter-spacing:-0.077px">Administrators</span><span class="qa"><svg class="abs" style="left:0;top:0" width="13.400" height="13.400" viewBox="0 0 13.400 13.400"><path d="M1.400 1.400L12 12M12 1.400L1.400 12" stroke="#8e8e8e" stroke-width="3.100" fill="none"/></svg><span class="qt" style="letter-spacing:-0.5px">close</span></span></div>
<div class="row alt" style="top:680px"><span class="vsep"></span><span class="cb rcb"></span><svg class="ic" viewBox="0 0 32 32"><rect width="32" height="32" rx="4.500" fill="url(#gblue)"/><g fill="#fff"><circle cx="17.900" cy="8" r="2.150"/><path fill-rule="evenodd" d="M9.400 9.500H16.700L17.400 22.700 16.900 23.600 12.900 19.600V25.800H10.500L10.600 17.900 6.700 25.800H4L10 13.400 9 12 7.700 12.900 8.200 13.800 7 14.500 5.900 12.300 6.800 11.300zM10.700 11.300L11.400 13.300 13.100 11.300zM14.900 13.200L13.400 16.700 15 19.600z"/><path d="M16.200 25.800L17.500 23.300C19 22.700 20.400 22.600 21.200 21.500 22.400 20 24.200 20.200 25.100 21.600 26 23 26.300 24.700 27.900 25.800z"/></g></svg><span class="tw"><a class="ti2" style="letter-spacing:0.019px">host test2.swdev.local connection timeout at node no</a><span class="el">...</span></span><span class="sub" style="letter-spacing:-0.057px">This whole VM network is having infrequent issues. Need to migrate them to our new infrastructure.</span><span class="c c-time" style="letter-spacing:0.056px">04:26 AM 10/21/2012</span><span class="c c-src" style="letter-spacing:-0.071px">Network Servers</span><span class="c c-sev"></span><span class="c c-obj" style="letter-spacing:0.167px">Node: lab.tex</span><span class="c c-st" style="letter-spacing:-0.182px">Acknowledged</span><span class="c c-who" style="letter-spacing:-0.100px">Trent Snell</span><span class="c c-grp" style="letter-spacing:-0.133px">Software admins3</span><span class="qa"><svg class="abs" style="left:0;top:0" width="13.400" height="13.400" viewBox="0 0 13.400 13.400"><path d="M1.400 1.400L12 12M12 1.400L1.400 12" stroke="#8e8e8e" stroke-width="3.100" fill="none"/></svg><span class="qt" style="letter-spacing:-0.5px">close</span></span></div>
<div class="row" style="top:720px"><span class="vsep"></span><span class="cb rcb"></span><svg class="ic" viewBox="0 0 32 32"><rect width="32" height="32" rx="4.500" fill="url(#gblue)"/><g fill="#fff"><circle cx="17.900" cy="8" r="2.150"/><path fill-rule="evenodd" d="M9.400 9.500H16.700L17.400 22.700 16.900 23.600 12.900 19.600V25.800H10.500L10.600 17.900 6.700 25.800H4L10 13.400 9 12 7.700 12.900 8.200 13.800 7 14.500 5.900 12.300 6.800 11.300zM10.700 11.300L11.400 13.300 13.100 11.300zM14.900 13.200L13.400 16.700 15 19.600z"/><path d="M16.200 25.800L17.500 23.300C19 22.700 20.400 22.600 21.200 21.500 22.400 20 24.200 20.200 25.100 21.600 26 23 26.300 24.700 27.900 25.800z"/></g></svg><a class="ti">Node hostname7 deleted</a><span class="sub">Removed on purpose.</span><span class="c c-time">11:15 AM 10/19/2012</span><span class="c c-src" style="letter-spacing:-0.033px">Software Servers</span><span class="c c-sev"></span><span class="c c-obj" style="letter-spacing:-0.050px">Node: node2</span><span class="c c-st" style="letter-spacing:-0.182px">Acknowledged</span><span class="c c-who">Nelle Love</span><span class="c c-grp" style="letter-spacing:-0.083px">Testing Group</span><span class="qa"><svg class="abs" style="left:0;top:0" width="13.400" height="13.400" viewBox="0 0 13.400 13.400"><path d="M1.400 1.400L12 12M12 1.400L1.400 12" stroke="#8e8e8e" stroke-width="3.100" fill="none"/></svg><span class="qt" style="letter-spacing:-0.5px">close</span></span></div>
 </div>
 <div id="sb">
  <svg class="abs" style="left:4px;top:7px" width="7" height="4" viewBox="0 0 7 4"><path d="M3.500 0L7 4H0z" fill="#222"/></svg>
  <div id="thumb"><i style="top:250px"></i><i style="top:253px"></i><i style="top:256px"></i></div>
  <svg class="abs" style="left:4px;top:721px" width="7" height="4" viewBox="0 0 7 4"><path d="M0 0h7L3.500 4z" fill="#222"/></svg>
 </div>
 <div id="pg">
  <svg class="abs" style="left:12px;top:7px" width="10" height="12" viewBox="0 0 10 12"><rect x="0" y=".5" width="2.800" height="11" fill="#c3c3c3"/><path d="M10 .5v11L3.500 6z" fill="#c3c3c3"/></svg>
  <svg class="abs" style="left:45px;top:7px" width="7" height="12" viewBox="0 0 7 12"><path d="M6.500 .5v11L0 6z" fill="#c3c3c3"/></svg>
  <div class="tsep" style="left:68px;top:7px"></div>
  <div class="pt" style="left:76px;letter-spacing:-0.3px">Page</div>
  <div class="pin" style="left:109px;width:31px">1</div>
  <div class="pt" style="left:146px;letter-spacing:0.2px">of 28</div>
  <div class="tsep" style="left:180px;top:7px"></div>
  <svg class="abs" style="left:197px;top:7px" width="7" height="12" viewBox="0 0 7 12"><path d="M0 .5v11L6.500 6z" fill="#5a5a5a"/></svg>
  <svg class="abs" style="left:227px;top:7px" width="10" height="12" viewBox="0 0 10 12"><rect x="7.200" y=".5" width="2.800" height="11" fill="#5a5a5a"/><path d="M0 .5v11L6.500 6z" fill="#5a5a5a"/></svg>
  <div class="tsep" style="left:251px;top:7px"></div>
  <svg class="abs" style="left:263px;top:5px" width="14" height="14" viewBox="0 0 14 14"><g fill="none" stroke="#8b8b8b" stroke-width="2"><path d="M2.300 4A5.200 5.200 0 0 1 10.600 2.800"/><path d="M11.700 10A5.200 5.200 0 0 1 3.400 11.200"/></g><g fill="#dcdcdc" stroke="#808080" stroke-width="1.100" stroke-linejoin="round"><path d="M8.200 6.900H13.400V1.700z"/><path d="M5.800 7.100H.6V12.300z"/></g></svg>
  <div class="tsep" style="left:291px;top:7px"></div>
  <div class="pt" style="left:298px;letter-spacing:-0.25px">Page size:</div>
  <div class="pin" style="left:360px;width:55px">25<i><svg class="abs" style="left:3px;top:5px" width="10" height="8" viewBox="0 0 10 8"><path d="M1 1.500l4 4 4-4" fill="none" stroke="#333" stroke-width="2"/></svg></i></div>
  <div class="pt" style="right:6px;letter-spacing:-0.12px">Displaying 1 - 25 of 686</div>
 </div>
</div>

<div id="foot">SolarWinds Alert Central 1.0  © 2012 - 2013   All Rights Reserved.</div>
<div id="task"><svg class="abs" style="left:0;top:0" width="1920" height="8" viewBox="0 0 1920 8"><defs><linearGradient id="tkb" x1="0" y1="0" x2="1" y2="0"><stop offset="0" stop-color="#8fa4c0"/><stop offset=".03" stop-color="#a3b9d6"/><stop offset=".855" stop-color="#a9c1de"/><stop offset=".885" stop-color="#8296ae"/><stop offset="1" stop-color="#7d8fa6"/></linearGradient><linearGradient id="tbn" x1="0" y1="0" x2="1" y2="0"><stop offset="0" stop-color="#eef2f8"/><stop offset="1" stop-color="#c6d3e6"/></linearGradient><linearGradient id="tby" x1="0" y1="0" x2="1" y2="0"><stop offset="0" stop-color="#fdf9d6"/><stop offset="1" stop-color="#f2df78"/></linearGradient></defs><rect width="1920" height="8" fill="url(#tkb)"/><rect width="1920" height="1" fill="#39424f"/><rect y="1" width="1920" height="1" fill="#c9d6e6" opacity=".45"/><rect x="0" y="1" width="58" height="7" fill="#7f93b0" opacity=".55"/><circle cx="27" cy="17.500" r="15" fill="#a3b8d4" stroke="#3d5a84" stroke-width="1.200"/><rect x="59" y="1.200" width="59.5" height="10" rx="2" fill="url(#tbn)" stroke="#2e3744" stroke-width="1.100"/><rect x="237.0" y="1.500" width="3" height="9" fill="#cfdbea" stroke="#3a4352" stroke-width=".9"/><rect x="240.0" y="1.500" width="3" height="9" fill="#cfdbea" stroke="#3a4352" stroke-width=".9"/><rect x="183.5" y="1.200" width="53.5" height="10" rx="2" fill="url(#tbn)" stroke="#2e3744" stroke-width="1.100"/><rect x="299.0" y="1.500" width="3" height="9" fill="#cfdbea" stroke="#3a4352" stroke-width=".9"/><rect x="302.0" y="1.500" width="3" height="9" fill="#cfdbea" stroke="#3a4352" stroke-width=".9"/><rect x="245.5" y="1.200" width="53.5" height="10" rx="2" fill="url(#tbn)" stroke="#2e3744" stroke-width="1.100"/><rect x="361.0" y="1.500" width="3" height="9" fill="#cfdbea" stroke="#3a4352" stroke-width=".9"/><rect x="364.0" y="1.500" width="3" height="9" fill="#cfdbea" stroke="#3a4352" stroke-width=".9"/><rect x="307.5" y="1.200" width="53.5" height="10" rx="2" fill="url(#tbn)" stroke="#2e3744" stroke-width="1.100"/><rect x="423.0" y="1.500" width="3" height="9" fill="#cfdbea" stroke="#3a4352" stroke-width=".9"/><rect x="426.0" y="1.500" width="3" height="9" fill="#cfdbea" stroke="#3a4352" stroke-width=".9"/><rect x="369.5" y="1.200" width="53.5" height="10" rx="2" fill="url(#tbn)" stroke="#2e3744" stroke-width="1.100"/><rect x="431.5" y="1.200" width="58" height="10" rx="2" fill="url(#tby)" stroke="#2e3744" stroke-width="1.100"/><rect x="493.5" y="1.200" width="58" height="10" rx="2" fill="url(#tbn)" stroke="#2e3744" stroke-width="1.100"/><rect x="555.5" y="1.200" width="58" height="10" rx="2" fill="url(#tbn)" stroke="#2e3744" stroke-width="1.100"/><rect x="671.0" y="1.500" width="3" height="9" fill="#cfdbea" stroke="#3a4352" stroke-width=".9"/><rect x="674.0" y="1.500" width="3" height="9" fill="#cfdbea" stroke="#3a4352" stroke-width=".9"/><rect x="617.5" y="1.200" width="53.5" height="10" rx="2" fill="url(#tbn)" stroke="#2e3744" stroke-width="1.100"/><rect x="679.5" y="1.200" width="58" height="10" rx="2" fill="url(#tbn)" stroke="#2e3744" stroke-width="1.100"/><rect x="741.5" y="1.200" width="58" height="10" rx="2" fill="url(#tbn)" stroke="#2e3744" stroke-width="1.100"/><rect x="803.5" y="1.200" width="58" height="10" rx="2" fill="url(#tbn)" stroke="#2e3744" stroke-width="1.100"/><rect x="865.5" y="1.200" width="58" height="10" rx="2" fill="url(#tbn)" stroke="#2e3744" stroke-width="1.100"/><rect x="927.5" y="1.200" width="66" height="10" rx="2" fill="url(#tbn)" stroke="#2e3744" stroke-width="1.100"/><rect x="75" y="6.800" width="15" height="3" fill="#c8b06a"/><path d="M147 8.500c2-2.500 7-3.800 12-2.800 3 .6 5 1.600 6 2.800" fill="none" stroke="#f2c23a" stroke-width="1.800"/><path d="M146 8.500c1-1 2.500-2 4-2.300" stroke="#3d8fd6" stroke-width="1.300" fill="none"/><path d="M196.500 9V7.500c0-1.300 1.200-2 2.500-2h17v3.500" fill="#d3eef5" stroke="#2aa9bf" stroke-width="1"/><path d="M259 9c0-2.500 4-4 9.500-4s10.500 1.500 10.500 4z" fill="#1ea7ea"/><circle cx="334.700" cy="16" r="10.500" fill="#dbe8f6" stroke="#1b4f9c" stroke-width="2"/><path d="M381 9V6c0-.8.600-1.200 1.500-1.200h23c.8 0 1.300.4 1.300 1.200V9z" fill="#f6d778" stroke="#d9ae3a" stroke-width=".8"/><circle cx="523" cy="14.500" r="8.500" fill="#de4436"/><rect x="571" y="5.200" width="28" height="5" rx="1" fill="#fbe48a" stroke="#e2b93a" stroke-width=".9"/><path d="M630 9V7.500c0-1.300 1.200-2 2.500-2h23.500v3.500" fill="#d3eef5" stroke="#2aa9bf" stroke-width="1"/><circle cx="709" cy="9.500" r="3.500" fill="#f3d9a4" stroke="#b98a2e" stroke-width="1.100"/><path d="M756 9V8c0-1.800 1.800-2.800 3.500-2.800h24v3.800" fill="#e4ecf5" stroke="#2a3a50" stroke-width="1.200"/><path d="M824 6.500h9l-2-1.300 9 .5 2 2.800h-4" fill="#2f8fe0" stroke="#1f6fc0" stroke-width=".8"/><rect x="889" y="6.800" width="11" height="3" fill="#8fd0f4"/><path d="M942 9V5.800h16l4 3.200z" fill="#f6f6f6" stroke="#8a8a8a" stroke-width=".8" stroke-dasharray="1 1"/><path d="M968 8.500l3-3.500" stroke="#c0392b" stroke-width="1.800"/><rect x="1906.500" y="1.500" width="14" height="8" fill="#9aa9bd" stroke="#4b586a" stroke-width="1"/></svg></div>
</body></html>
